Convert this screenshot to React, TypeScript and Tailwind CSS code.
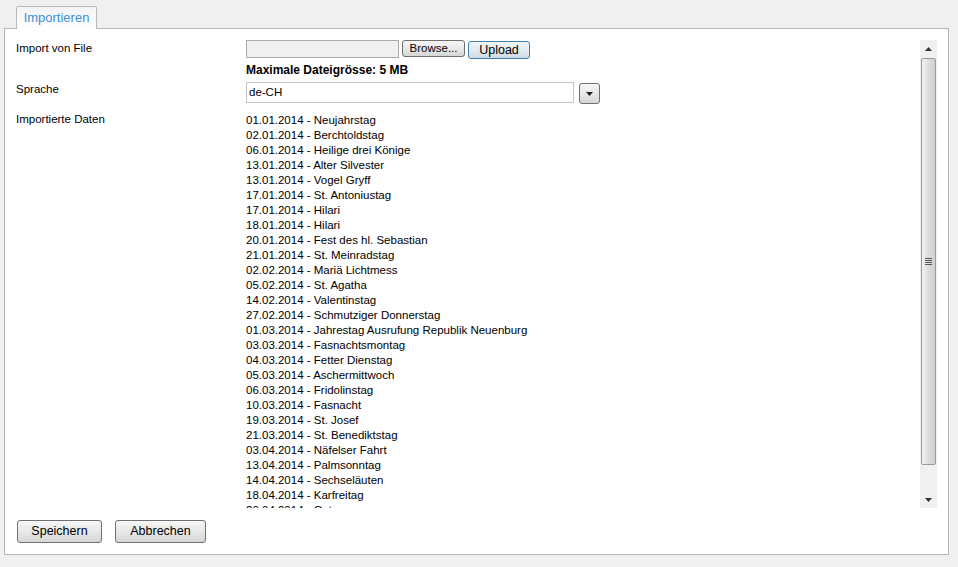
import React from 'react';

const holidays = [
    '01.01.2014 - Neujahrstag',
    '02.01.2014 - Berchtoldstag',
    '06.01.2014 - Heilige drei Könige',
    '13.01.2014 - Alter Silvester',
    '13.01.2014 - Vogel Gryff',
    '17.01.2014 - St. Antoniustag',
    '17.01.2014 - Hilari',
    '18.01.2014 - Hilari',
    '20.01.2014 - Fest des hl. Sebastian',
    '21.01.2014 - St. Meinradstag',
    '02.02.2014 - Mariä Lichtmess',
    '05.02.2014 - St. Agatha',
    '14.02.2014 - Valentinstag',
    '27.02.2014 - Schmutziger Donnerstag',
    '01.03.2014 - Jahrestag Ausrufung Republik Neuenburg',
    '03.03.2014 - Fasnachtsmontag',
    '04.03.2014 - Fetter Dienstag',
    '05.03.2014 - Aschermittwoch',
    '06.03.2014 - Fridolinstag',
    '10.03.2014 - Fasnacht',
    '19.03.2014 - St. Josef',
    '21.03.2014 - St. Benediktstag',
    '03.04.2014 - Näfelser Fahrt',
    '13.04.2014 - Palmsonntag',
    '14.04.2014 - Sechseläuten',
    '18.04.2014 - Karfreitag',
    '20.04.2014 - Ostern',
    '21.04.2014 - Ostermontag',
];

const btn =
    'border border-[#707070] rounded-[3px] bg-gradient-to-b from-[#f6f6f6] via-[#e8e8e8] to-[#d6d6d6] text-[#000] leading-none flex items-center justify-center';

function Scrollbar() {
    return (
        <div className="w-[17px] h-full bg-[#f0f0f0] flex flex-col">
            <div className="h-[17px] flex items-center justify-center">
                <svg width="7" height="4" viewBox="0 0 7 4">
                    <path d="M3.5 0 L7 4 L0 4 Z" fill="#333" />
                </svg>
            </div>
            <div className="flex-1 flex flex-col px-[1px] pt-[1px]">
                <div className="h-[407px] rounded-[2px] border border-[#9a9a9a] bg-gradient-to-r from-[#f2f2f2] via-[#dcdcdc] to-[#cfcfcf] flex items-center justify-center">
                    <div className="flex flex-col gap-[1px]">
                        <div className="w-[7px] h-[1px] bg-[#555]" />
                        <div className="w-[7px] h-[1px] bg-[#555]" />
                        <div className="w-[7px] h-[1px] bg-[#555]" />
                        <div className="w-[7px] h-[1px] bg-[#555]" />
                    </div>
                </div>
            </div>
            <div className="h-[17px] flex items-center justify-center">
                <svg width="7" height="4" viewBox="0 0 7 4">
                    <path d="M0 0 L7 0 L3.5 4 Z" fill="#333" />
                </svg>
            </div>
        </div>
    );
}

export default function App() {
    return (
        <div
            className="w-[958px] h-[567px] bg-[#f0f0f0] text-[11.5px] text-[#000] overflow-hidden"
            style={{ fontFamily: '"Liberation Sans", Arial, sans-serif' }}
        >
            <div className="pt-[6px] pl-[16px] h-[29px] flex">
                <div className="relative z-10 w-[81px] h-[23px] border border-b-0 border-[#b9b9b9] rounded-t-[2px] bg-gradient-to-b from-[#f4f4f4] to-white text-[#3d8fd5] text-[13px] flex items-center justify-center">
                    Importieren
                </div>
            </div>
            <div className="-mt-px ml-[4px] w-[945px] h-[527px] border border-[#b5b5b5] bg-white flex flex-col">
                <div className="flex h-[468px] mt-[11px] pr-[11px]">
                    <div className="flex-1 overflow-hidden">
                        <div className="grid grid-cols-[230px_1fr] pl-[11px]">
                            <div className="h-[42px]">Import von File</div>
                            <div>
                                <div className="flex items-start gap-[3px]">
                                    <div className="w-[153px] h-[18px] border border-[#ababab] bg-[#f0f0f0]" />
                                    <div className={`${btn} w-[63px] h-[17px] text-[11.5px]`}>Browse...</div>
                                    <div className="w-[62px] h-[18px] mt-[1px] border border-[#3c7fb1] rounded-[3px] bg-gradient-to-b from-[#f0f6fa] via-[#e2ebf1] to-[#d0dbe3] text-[12.5px] flex items-center justify-center">
                                        Upload
                                    </div>
                                </div>
                                <div className="font-bold text-[12px] mt-[4px] leading-[14px] text-black">
                                    Maximale Dateigrösse: 5 MB
                                </div>
                            </div>
                            <div className="h-[30px] leading-[15px]">Sprache</div>
                            <div className="flex items-start gap-[5px]">
                                <div className="w-[328px] h-[21px] border border-[#c5c5c5] bg-white px-[2px] flex items-center">
                                    de-CH
                                </div>
                                <div className={`${btn} w-[21px] h-[21px] mt-[1px]`}>
                                    <svg width="7" height="4" viewBox="0 0 7 4">
                                        <path d="M0 0 L7 0 L3.5 4 Z" fill="#222" />
                                    </svg>
                                </div>
                            </div>
                            <div className="leading-[15px]">Importierte Daten</div>
                            <div className="leading-[15px] mt-[1px]">
                                {holidays.map((h, i) => (
                                    <div key={i}>{h}</div>
                                ))}
                            </div>
                        </div>
                    </div>
                    <Scrollbar />
                </div>
                <div className="flex gap-[13px] pl-[12px] mt-[12px]">
                    <div className={`${btn} w-[85px] h-[23px] text-[12.5px]`}>Speichern</div>
                    <div className={`${btn} w-[91px] h-[23px] text-[12.5px]`}>Abbrechen</div>
                </div>
            </div>
        </div>
    );
}
